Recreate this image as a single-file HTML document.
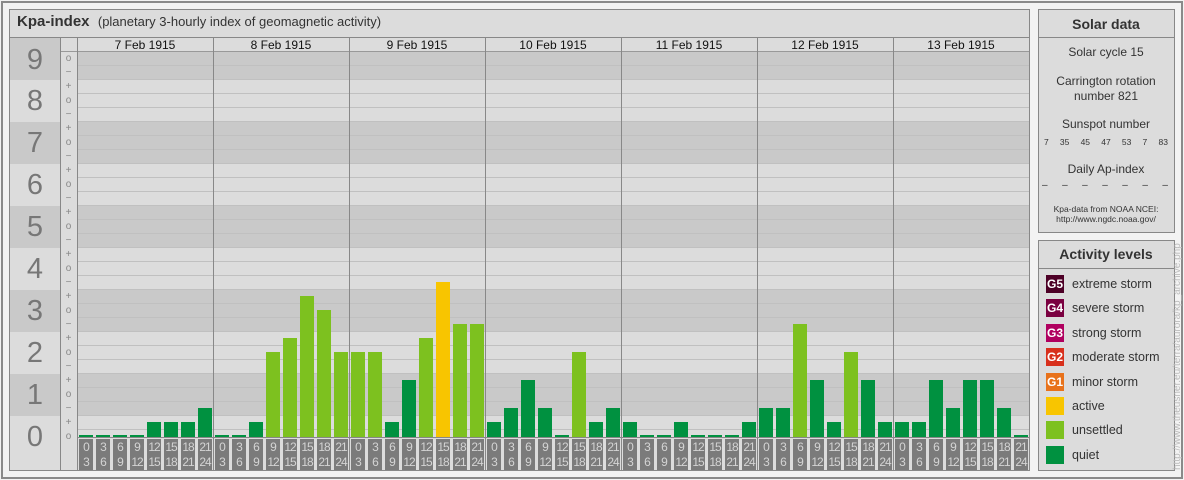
<!DOCTYPE html>
<html><head><meta charset="utf-8"><style>
*{margin:0;padding:0;box-sizing:border-box}
body{width:1184px;height:480px;background:#f3f3f3;font-family:"Liberation Sans",sans-serif;position:relative;overflow:hidden}
.a{position:absolute}
.frame{left:1px;top:1px;width:1182px;height:478px;border:2px solid #8a8a8a}
.pan{background:#dcdcdc;border:1px solid #888}
.hl{position:absolute;height:1px;background:#c0c0c0;left:77px;width:952px}
.dk{position:absolute;background:#c9c9c9;left:77px;width:952px}
.num{position:absolute;left:10px;width:50px;text-align:center;font-size:29px;color:#777;line-height:42px}
.sg{position:absolute;left:60px;width:17px;text-align:center;font-size:10px;color:#888;line-height:14px}
.vl{position:absolute;top:38px;width:1px;height:432px;background:#888}
.dh{position:absolute;top:38px;width:136px;text-align:center;font-size:12px;line-height:14px;color:#111}
.b{position:absolute;width:14px;bottom:43px}
.q{background:#009140}.u{background:#7dc11f}.y{background:#f8c500}
.t{position:absolute;top:439px;width:14px;height:31px;background:#7b7b7b;color:#d4d4d4;font-size:12px;line-height:15px;text-align:center;letter-spacing:-1px;padding-top:1px}
.sd{font-size:12px;color:#333;text-align:center;position:absolute;width:136px;left:1038px}
.row{position:absolute;left:1044px;width:124px;display:flex;justify-content:space-between;color:#333}
.lg{position:absolute;left:1046px;width:18px;height:18px;color:#fff;font-size:12px;font-weight:bold;text-align:center;line-height:18px}
.lt{position:absolute;left:1072px;font-size:12.5px;color:#333;line-height:18px}
</style></head><body>
<div class="a frame"></div>
<div class="a pan" style="left:9px;top:9px;width:1021px;height:462px"></div>
<div class="a" style="left:10px;top:37px;width:1019px;height:1px;background:#888"></div>
<div class="a" style="left:17px;top:13px;font-size:15px;color:#333"><b>Kpa-index</b>&nbsp;&nbsp;<span style="font-size:13px">(planetary 3-hourly index of geomagnetic activity)</span></div>
<div class="a" style="left:10px;top:38px;width:50px;height:42px;background:#c9c9c9"></div>
<div class="a" style="left:10px;top:122px;width:50px;height:42px;background:#c9c9c9"></div>
<div class="a" style="left:10px;top:206px;width:50px;height:42px;background:#c9c9c9"></div>
<div class="a" style="left:10px;top:290px;width:50px;height:42px;background:#c9c9c9"></div>
<div class="a" style="left:10px;top:374px;width:50px;height:42px;background:#c9c9c9"></div>
<div class="num" style="top:39px">9</div><div class="num" style="top:80px">8</div><div class="num" style="top:122px">7</div><div class="num" style="top:164px">6</div><div class="num" style="top:206px">5</div><div class="num" style="top:248px">4</div><div class="num" style="top:290px">3</div><div class="num" style="top:332px">2</div><div class="num" style="top:374px">1</div><div class="num" style="top:416px">0</div>
<div class="dk" style="top:51px;height:28px"></div>
<div class="dk" style="top:121px;height:42px"></div>
<div class="dk" style="top:205px;height:42px"></div>
<div class="dk" style="top:289px;height:42px"></div>
<div class="dk" style="top:373px;height:42px"></div>
<div class="a" style="left:60px;top:51px;width:969px;height:1px;background:#999"></div>
<div class="hl" style="top:65px"></div><div class="hl" style="top:79px"></div><div class="hl" style="top:93px"></div><div class="hl" style="top:107px"></div><div class="hl" style="top:121px"></div><div class="hl" style="top:135px"></div><div class="hl" style="top:149px"></div><div class="hl" style="top:163px"></div><div class="hl" style="top:177px"></div><div class="hl" style="top:191px"></div><div class="hl" style="top:205px"></div><div class="hl" style="top:219px"></div><div class="hl" style="top:233px"></div><div class="hl" style="top:247px"></div><div class="hl" style="top:261px"></div><div class="hl" style="top:275px"></div><div class="hl" style="top:289px"></div><div class="hl" style="top:303px"></div><div class="hl" style="top:317px"></div><div class="hl" style="top:331px"></div><div class="hl" style="top:345px"></div><div class="hl" style="top:359px"></div><div class="hl" style="top:373px"></div><div class="hl" style="top:387px"></div><div class="hl" style="top:401px"></div><div class="hl" style="top:415px"></div><div class="hl" style="top:429px"></div>
<div class="a" style="left:77px;top:437px;width:952px;height:1px;background:#888"></div>
<div class="sg" style="top:52px">o</div><div class="sg" style="top:66px">−</div>
<div class="sg" style="top:80px">+</div><div class="sg" style="top:94px">o</div><div class="sg" style="top:108px">−</div>
<div class="sg" style="top:122px">+</div><div class="sg" style="top:136px">o</div><div class="sg" style="top:150px">−</div>
<div class="sg" style="top:164px">+</div><div class="sg" style="top:178px">o</div><div class="sg" style="top:192px">−</div>
<div class="sg" style="top:206px">+</div><div class="sg" style="top:220px">o</div><div class="sg" style="top:234px">−</div>
<div class="sg" style="top:248px">+</div><div class="sg" style="top:262px">o</div><div class="sg" style="top:276px">−</div>
<div class="sg" style="top:290px">+</div><div class="sg" style="top:304px">o</div><div class="sg" style="top:318px">−</div>
<div class="sg" style="top:332px">+</div><div class="sg" style="top:346px">o</div><div class="sg" style="top:360px">−</div>
<div class="sg" style="top:374px">+</div><div class="sg" style="top:388px">o</div><div class="sg" style="top:402px">−</div>
<div class="sg" style="top:416px">+</div><div class="sg" style="top:430px">o</div>
<div class="vl" style="left:60px"></div><div class="vl" style="left:77px"></div><div class="vl" style="left:213px"></div><div class="vl" style="left:349px"></div><div class="vl" style="left:485px"></div><div class="vl" style="left:621px"></div><div class="vl" style="left:757px"></div><div class="vl" style="left:893px"></div>
<div class="dh" style="left:77px">7 Feb 1915</div><div class="dh" style="left:213px">8 Feb 1915</div><div class="dh" style="left:349px">9 Feb 1915</div><div class="dh" style="left:485px">10 Feb 1915</div><div class="dh" style="left:621px">11 Feb 1915</div><div class="dh" style="left:757px">12 Feb 1915</div><div class="dh" style="left:893px">13 Feb 1915</div>
<div class="b q" style="left:79px;height:2px"></div><div class="b q" style="left:96px;height:2px"></div><div class="b q" style="left:113px;height:2px"></div><div class="b q" style="left:130px;height:2px"></div><div class="b q" style="left:147px;height:15px"></div><div class="b q" style="left:164px;height:15px"></div><div class="b q" style="left:181px;height:15px"></div><div class="b q" style="left:198px;height:29px"></div>
<div class="b q" style="left:215px;height:2px"></div><div class="b q" style="left:232px;height:2px"></div><div class="b q" style="left:249px;height:15px"></div><div class="b u" style="left:266px;height:85px"></div><div class="b u" style="left:283px;height:99px"></div><div class="b u" style="left:300px;height:141px"></div><div class="b u" style="left:317px;height:127px"></div><div class="b u" style="left:334px;height:85px"></div>
<div class="b u" style="left:351px;height:85px"></div><div class="b u" style="left:368px;height:85px"></div><div class="b q" style="left:385px;height:15px"></div><div class="b q" style="left:402px;height:57px"></div><div class="b u" style="left:419px;height:99px"></div><div class="b y" style="left:436px;height:155px"></div><div class="b u" style="left:453px;height:113px"></div><div class="b u" style="left:470px;height:113px"></div>
<div class="b q" style="left:487px;height:15px"></div><div class="b q" style="left:504px;height:29px"></div><div class="b q" style="left:521px;height:57px"></div><div class="b q" style="left:538px;height:29px"></div><div class="b q" style="left:555px;height:2px"></div><div class="b u" style="left:572px;height:85px"></div><div class="b q" style="left:589px;height:15px"></div><div class="b q" style="left:606px;height:29px"></div>
<div class="b q" style="left:623px;height:15px"></div><div class="b q" style="left:640px;height:2px"></div><div class="b q" style="left:657px;height:2px"></div><div class="b q" style="left:674px;height:15px"></div><div class="b q" style="left:691px;height:2px"></div><div class="b q" style="left:708px;height:2px"></div><div class="b q" style="left:725px;height:2px"></div><div class="b q" style="left:742px;height:15px"></div>
<div class="b q" style="left:759px;height:29px"></div><div class="b q" style="left:776px;height:29px"></div><div class="b u" style="left:793px;height:113px"></div><div class="b q" style="left:810px;height:57px"></div><div class="b q" style="left:827px;height:15px"></div><div class="b u" style="left:844px;height:85px"></div><div class="b q" style="left:861px;height:57px"></div><div class="b q" style="left:878px;height:15px"></div>
<div class="b q" style="left:895px;height:15px"></div><div class="b q" style="left:912px;height:15px"></div><div class="b q" style="left:929px;height:57px"></div><div class="b q" style="left:946px;height:29px"></div><div class="b q" style="left:963px;height:57px"></div><div class="b q" style="left:980px;height:57px"></div><div class="b q" style="left:997px;height:29px"></div><div class="b q" style="left:1014px;height:2px"></div>
<div class="t" style="left:79px">0<br>3</div><div class="t" style="left:96px">3<br>6</div><div class="t" style="left:113px">6<br>9</div><div class="t" style="left:130px">9<br>12</div><div class="t" style="left:147px">12<br>15</div><div class="t" style="left:164px">15<br>18</div><div class="t" style="left:181px">18<br>21</div><div class="t" style="left:198px">21<br>24</div>
<div class="t" style="left:215px">0<br>3</div><div class="t" style="left:232px">3<br>6</div><div class="t" style="left:249px">6<br>9</div><div class="t" style="left:266px">9<br>12</div><div class="t" style="left:283px">12<br>15</div><div class="t" style="left:300px">15<br>18</div><div class="t" style="left:317px">18<br>21</div><div class="t" style="left:334px">21<br>24</div>
<div class="t" style="left:351px">0<br>3</div><div class="t" style="left:368px">3<br>6</div><div class="t" style="left:385px">6<br>9</div><div class="t" style="left:402px">9<br>12</div><div class="t" style="left:419px">12<br>15</div><div class="t" style="left:436px">15<br>18</div><div class="t" style="left:453px">18<br>21</div><div class="t" style="left:470px">21<br>24</div>
<div class="t" style="left:487px">0<br>3</div><div class="t" style="left:504px">3<br>6</div><div class="t" style="left:521px">6<br>9</div><div class="t" style="left:538px">9<br>12</div><div class="t" style="left:555px">12<br>15</div><div class="t" style="left:572px">15<br>18</div><div class="t" style="left:589px">18<br>21</div><div class="t" style="left:606px">21<br>24</div>
<div class="t" style="left:623px">0<br>3</div><div class="t" style="left:640px">3<br>6</div><div class="t" style="left:657px">6<br>9</div><div class="t" style="left:674px">9<br>12</div><div class="t" style="left:691px">12<br>15</div><div class="t" style="left:708px">15<br>18</div><div class="t" style="left:725px">18<br>21</div><div class="t" style="left:742px">21<br>24</div>
<div class="t" style="left:759px">0<br>3</div><div class="t" style="left:776px">3<br>6</div><div class="t" style="left:793px">6<br>9</div><div class="t" style="left:810px">9<br>12</div><div class="t" style="left:827px">12<br>15</div><div class="t" style="left:844px">15<br>18</div><div class="t" style="left:861px">18<br>21</div><div class="t" style="left:878px">21<br>24</div>
<div class="t" style="left:895px">0<br>3</div><div class="t" style="left:912px">3<br>6</div><div class="t" style="left:929px">6<br>9</div><div class="t" style="left:946px">9<br>12</div><div class="t" style="left:963px">12<br>15</div><div class="t" style="left:980px">15<br>18</div><div class="t" style="left:997px">18<br>21</div><div class="t" style="left:1014px">21<br>24</div>
<div class="a pan" style="left:1038px;top:9px;width:137px;height:224px"></div>
<div class="a" style="left:1039px;top:37px;width:135px;height:1px;background:#888"></div>
<div class="sd" style="top:16px;font-size:14px;font-weight:bold;color:#333">Solar data</div>
<div class="sd" style="top:45px">Solar cycle 15</div>
<div class="sd" style="top:74px;line-height:15px">Carrington rotation<br>number 821</div>
<div class="sd" style="top:117px">Sunspot number</div>
<div class="row" style="top:137px;font-size:8.5px"><span>7</span><span>35</span><span>45</span><span>47</span><span>53</span><span>7</span><span>83</span></div>
<div class="sd" style="top:162px">Daily Ap-index</div>
<div class="row" style="top:180px;font-size:10px;left:1042px;width:126px"><span>–</span><span>–</span><span>–</span><span>–</span><span>–</span><span>–</span><span>–</span></div>
<div class="sd" style="top:204px;font-size:8.5px;line-height:10px">Kpa-data from NOAA NCEI:<br>http://www.ngdc.noaa.gov/</div>
<div class="a pan" style="left:1038px;top:240px;width:137px;height:231px"></div>
<div class="a" style="left:1039px;top:268px;width:135px;height:1px;background:#888"></div>
<div class="sd" style="top:246px;font-size:14px;font-weight:bold;color:#333">Activity levels</div>
<div class="lg" style="top:275px;background:#4d0026">G5</div><div class="lt" style="top:275px">extreme storm</div>
<div class="lg" style="top:299px;background:#7a0040">G4</div><div class="lt" style="top:299px">severe storm</div>
<div class="lg" style="top:324px;background:#b0005f">G3</div><div class="lt" style="top:324px">strong storm</div>
<div class="lg" style="top:348px;background:#d8301c">G2</div><div class="lt" style="top:348px">moderate storm</div>
<div class="lg" style="top:373px;background:#e8721b">G1</div><div class="lt" style="top:373px">minor storm</div>
<div class="lg" style="top:397px;background:#f8c500"></div><div class="lt" style="top:397px">active</div>
<div class="lg" style="top:421px;background:#7dc11f"></div><div class="lt" style="top:421px">unsettled</div>
<div class="lg" style="top:446px;background:#009140"></div><div class="lt" style="top:446px">quiet</div>
<div class="a" style="left:1172px;top:470px;transform-origin:0 0;transform:rotate(-90deg);font-size:10px;color:#bbb;white-space:nowrap;line-height:12px">http://www.theusner.eu/terra/aurora/kp_archive.php</div>
</body></html>
